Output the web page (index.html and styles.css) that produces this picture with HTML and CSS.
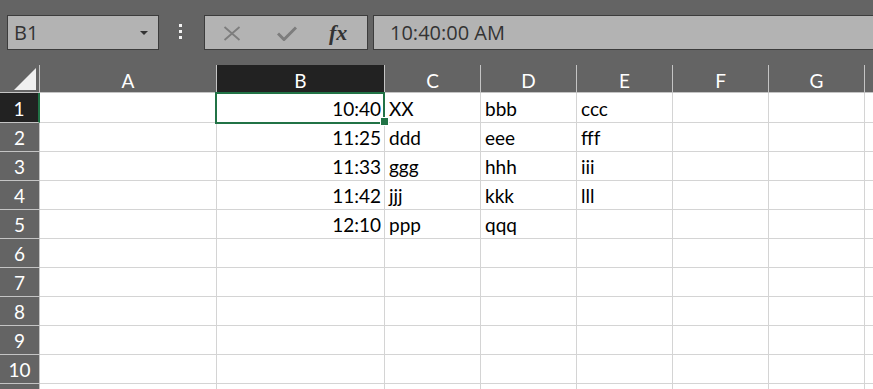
FILE: index.html
```html
<!DOCTYPE html>
<html>
<head>
<meta charset="utf-8">
<link rel="stylesheet" href="styles.css">
</head>
<body>
<div class="app">
  <div class="toolbar">
    <div class="namebox">
      <span class="nb-text">B1</span>
      <svg class="nb-arrow" width="8" height="4" viewBox="0 0 8 4"><polygon points="0,0 8,0 4,4" fill="#333"/></svg>
    </div>
    <div class="dots"><i></i><i></i><i></i></div>
    <div class="fbtns">
      <svg class="ic-x" width="18" height="15" viewBox="0 0 18 15"><path d="M1.5 1 L16.5 14 M16.5 1 L1.5 14" stroke="#7d7d7d" stroke-width="1.8" fill="none"/></svg>
      <svg class="ic-check" width="20" height="15" viewBox="0 0 20 15"><path d="M1 7.5 L7 13.5 L19 1.5" stroke="#7d7d7d" stroke-width="3" fill="none"/></svg>
      <span class="fx">fx</span>
    </div>
    <div class="fbar">10:40:00 AM</div>
  </div>
  <div class="sheet">
    <div class="corner"><svg width="22" height="22" viewBox="0 0 22 22"><polygon points="0,22 22,22 22,0" fill="#f0f0f0"/></svg></div>
    <div class="ch">A</div>
    <div class="ch sel">B</div>
    <div class="ch">C</div>
    <div class="ch">D</div>
    <div class="ch">E</div>
    <div class="ch">F</div>
    <div class="ch">G</div>
    <div class="ch"></div>

    <div class="rh sel r1">1</div><div class="c r1"></div><div class="c r1 num">10:40</div><div class="c r1">XX</div><div class="c r1">bbb</div><div class="c r1">ccc</div><div class="c r1"></div><div class="c r1"></div><div class="c r1"></div>
    <div class="rh">2</div><div class="c"></div><div class="c num">11:25</div><div class="c">ddd</div><div class="c">eee</div><div class="c">fff</div><div class="c"></div><div class="c"></div><div class="c"></div>
    <div class="rh">3</div><div class="c"></div><div class="c num">11:33</div><div class="c">ggg</div><div class="c">hhh</div><div class="c">iii</div><div class="c"></div><div class="c"></div><div class="c"></div>
    <div class="rh">4</div><div class="c"></div><div class="c num">11:42</div><div class="c">jjj</div><div class="c">kkk</div><div class="c">lll</div><div class="c"></div><div class="c"></div><div class="c"></div>
    <div class="rh">5</div><div class="c"></div><div class="c num">12:10</div><div class="c">ppp</div><div class="c">qqq</div><div class="c"></div><div class="c"></div><div class="c"></div><div class="c"></div>
    <div class="rh">6</div><div class="c"></div><div class="c"></div><div class="c"></div><div class="c"></div><div class="c"></div><div class="c"></div><div class="c"></div><div class="c"></div>
    <div class="rh">7</div><div class="c"></div><div class="c"></div><div class="c"></div><div class="c"></div><div class="c"></div><div class="c"></div><div class="c"></div><div class="c"></div>
    <div class="rh">8</div><div class="c"></div><div class="c"></div><div class="c"></div><div class="c"></div><div class="c"></div><div class="c"></div><div class="c"></div><div class="c"></div>
    <div class="rh">9</div><div class="c"></div><div class="c"></div><div class="c"></div><div class="c"></div><div class="c"></div><div class="c"></div><div class="c"></div><div class="c"></div>
    <div class="rh">10</div><div class="c"></div><div class="c"></div><div class="c"></div><div class="c"></div><div class="c"></div><div class="c"></div><div class="c"></div><div class="c"></div>
    <div class="rh"></div><div class="c"></div><div class="c"></div><div class="c"></div><div class="c"></div><div class="c"></div><div class="c"></div><div class="c"></div><div class="c"></div>

    <div class="selection"><div class="handle"></div></div>
  </div>
</div>
</body>
</html>
```

FILE: styles.css
```css
* { box-sizing: border-box; }
html, body { margin: 0; padding: 0; }
body {
  width: 873px;
  height: 389px;
  overflow: hidden;
  background: #fff;
}
.app {
  width: 873px;
  height: 389px;
  overflow: hidden;
  display: flex;
  flex-direction: column;
}
.toolbar {
  height: 65px;
  flex: none;
  background: #646464;
  display: flex;
  align-items: flex-start;
  padding: 15px 0 0 7px;
}
.namebox {
  width: 152px;
  height: 35px;
  background: #b3b3b3;
  border: 1px solid #3c3c3c;
  display: flex;
  align-items: center;
  justify-content: space-between;
  padding: 0 10px 0 6px;
}
.nb-text, .fbar {
  font-family: "Open Sans", "Noto Sans", sans-serif;
  font-size: 20px;
  color: #333;
  line-height: 33px;
}
.dots {
  margin-left: 20px;
  margin-top: 9px;
  display: flex;
  flex-direction: column;
  gap: 3px;
}
.dots i {
  display: block;
  width: 3px;
  height: 3px;
  background: #f2f2f2;
}
.fbtns {
  margin-left: 22px;
  width: 164px;
  height: 35px;
  background: #b3b3b3;
  border: 1px solid #3c3c3c;
  display: flex;
  align-items: center;
  padding-left: 18px;
}
.ic-x { margin-top: 2px; }
.ic-check { margin-left: 36px; margin-top: 2px; }
.fx {
  margin-left: 32px;
  font-family: "Liberation Serif", serif;
  font-style: italic;
  font-weight: bold;
  font-size: 22px;
  color: #333;
  line-height: 33px;
}
.fbar {
  margin-left: 5px;
  flex: 1;
  height: 35px;
  background: #b3b3b3;
  border: 1px solid #3c3c3c;
  border-right: none;
  padding-left: 16px;
}
.sheet {
  position: relative;
  flex: 1;
  overflow: hidden;
  display: grid;
  grid-template-columns: 40px 177px 168px 96px 96px 96px 96px 96px 1fr;
  grid-template-rows: 28px 30px repeat(10, 29px);
  font-family: Lato, "Open Sans", sans-serif;
  font-size: 19px;
}
.corner, .ch {
  background: #646464;
  border-right: 1px solid #c4c4c4;
  border-bottom: 1px solid #c4c4c4;
  color: #fff;
  text-align: center;
  padding-top: 4px;
  line-height: 23px;
}
.corner {
  display: flex;
  align-items: flex-end;
  justify-content: flex-end;
  padding: 0 3px 2px 0;
}
.corner svg { display: block; }
.ch.sel {
  background: #222;
  border-bottom: none;
}
.rh {
  background: #646464;
  color: #fff;
  text-align: center;
  border-right: 1px solid #c4c4c4;
  border-bottom: 1px solid #c4c4c4;
  padding-top: 3px;
  line-height: 23px;
}
.rh.sel {
  background: #222;
  border-right: 2px solid #217346;
}
.c {
  border-right: 1px solid #d4d4d4;
  border-bottom: 1px solid #d4d4d4;
  padding: 3px 4px 0 4px;
  line-height: 23px;
  color: #000;
  white-space: nowrap;
  overflow: hidden;
}
.r1 { padding-top: 4px; }
.c.num { text-align: right; padding-right: 3px; }
.selection {
  position: absolute;
  left: 215px;
  top: 27px;
  width: 170px;
  height: 32px;
  border: 2px solid #217346;
  pointer-events: none;
}
.handle {
  position: absolute;
  left: 164px;
  top: 24px;
  width: 7px;
  height: 7px;
  background: #217346;
  box-shadow: 0 0 0 1px #fff;
}
```
